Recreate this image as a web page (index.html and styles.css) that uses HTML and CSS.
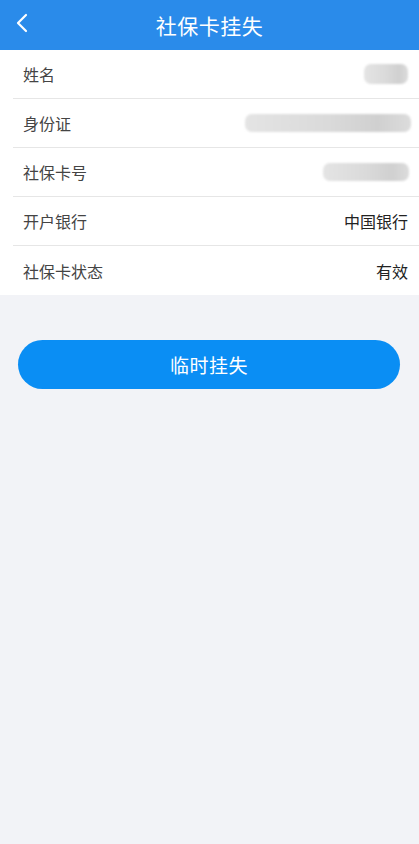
FILE: index.html
```html
<!DOCTYPE html>
<html lang="zh">
<head>
<meta charset="utf-8">
<link rel="stylesheet" href="styles.css">
</head>
<body>
<header class="topbar">
  <svg class="back" width="14" height="22" viewBox="0 0 14 22"><path d="M11 3 L3 11 L11 19" fill="none" stroke="#fff" stroke-width="2.2" stroke-linecap="round" stroke-linejoin="round"/></svg>
  <h1 class="title">社保卡挂失</h1>
</header>
<section class="list">
  <div class="row"><span class="label">姓名</span><span class="blur blur-name"></span></div>
  <div class="row"><span class="label">身份证</span><span class="blur blur-id"></span></div>
  <div class="row"><span class="label">社保卡号</span><span class="blur blur-card"></span></div>
  <div class="row"><span class="label">开户银行</span><span class="value">中国银行</span></div>
  <div class="row last"><span class="label">社保卡状态</span><span class="value">有效</span></div>
</section>
<div class="action">
  <button class="btn">临时挂失</button>
</div>
</body>
</html>
```
FILE: styles.css
```css
html, body {
  margin: 0;
  padding: 0;
  height: 100%;
}
body {
  background: #f2f3f7;
  font-family: "Noto Sans CJK SC", "Noto Sans", sans-serif;
}
.topbar {
  height: 50px;
  background: #2a8bea;
  display: flex;
  align-items: center;
  justify-content: center;
  position: relative;
}
.back {
  position: absolute;
  left: 15px;
  top: 12px;
}
.title {
  margin: 0;
  color: #fff;
  font-size: 21px;
  font-weight: 400;
  letter-spacing: 0.5px;
}
.list {
  background: #fff;
  padding-left: 13px;
}
.row {
  height: 48px;
  display: flex;
  align-items: center;
  justify-content: space-between;
  padding: 0 11px 0 10px;
  border-bottom: 1px solid #e6e6e6;
}
.row.last {
  border-bottom: none;
  height: 49px;
}
.label {
  font-size: 16px;
  color: #444;
}
.value {
  font-size: 16px;
  color: #222;
}
.blur {
  display: block;
  border-radius: 7px;
  background: linear-gradient(90deg, #e4e4e4 0%, #dadada 50%, #d0d0d0 80%, #dcdcdc 100%);
  filter: blur(1px);
}
.blur-name {
  width: 44px;
  height: 20px;
}
.blur-id {
  width: 166px;
  height: 18px;
  margin-right: -3px;
}
.blur-card {
  width: 86px;
  height: 18px;
  margin-right: -1px;
}
.action {
  padding: 45px 19px 0 18px;
}
.btn {
  width: 100%;
  height: 49px;
  border: none;
  border-radius: 25px;
  background: #0a8ef4;
  color: #fff;
  font-family: "Noto Sans CJK SC", "Noto Sans", sans-serif;
  font-size: 19px;
  letter-spacing: 0.5px;
}
```
